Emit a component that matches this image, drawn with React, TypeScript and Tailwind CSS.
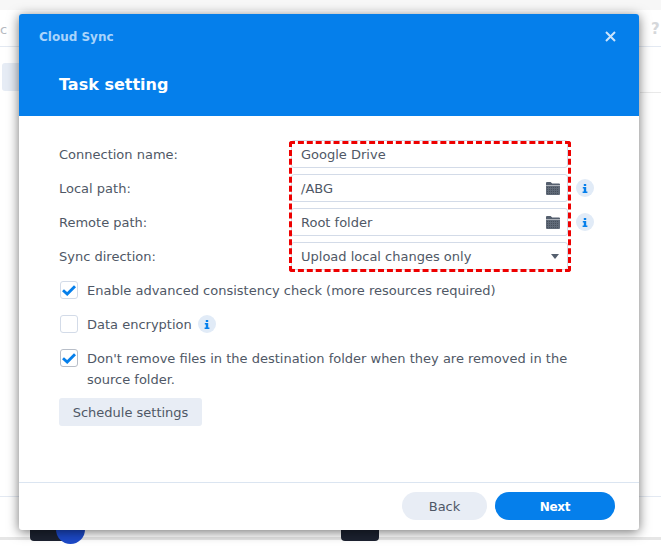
const FONT = "font-['DejaVu_Sans',sans-serif]";

function InfoIcon() {
  return (
    <span className="flex h-[18px] w-[18px] shrink-0 items-center justify-center rounded-full bg-[#e1ebf7]">
      <svg width="6" height="9" viewBox="0 0 6 9" fill="#057feb">
        <rect x="1.8" y="0" width="2.4" height="2" />
        <path d="M0.8 3h3.4v4.6H5.4V9H0.6V7.6h1.2V4.4h-1z" />
      </svg>
    </span>
  );
}

function FolderIcon() {
  return (
    <svg width="14" height="13" viewBox="0 0 14 13" className="-mr-px shrink-0">
      <path d="M0 1a1 1 0 0 1 1-1h3.6l1.6 1.6H13a1 1 0 0 1 1 1V3H0z" fill="#555f6e" />
      <path d="M0 3.6h14V12a1 1 0 0 1-1 1H1a1 1 0 0 1-1-1z" fill="#606a78" />
      <path d="M1 5.5h12M1 7.5h12M1 9.5h12M1 11.5h12" stroke="#47505c" strokeWidth="1" strokeDasharray="1 1" />
    </svg>
  );
}

function Check({ checked, dark }: { checked?: boolean; dark?: boolean }) {
  return (
    <span
      className={`flex h-[18px] w-[18px] shrink-0 items-center justify-center rounded-[3px] border bg-white ${
        dark ? "border-[#b8bec8]" : "border-[#d3dbe8]"
      }`}
    >
      {checked && (
        <svg width="14" height="11" viewBox="0 0 14 11" fill="none">
          <path d="M1 5.2l4.2 3.9L13 1.2" stroke="#057feb" strokeWidth="2.8" />
        </svg>
      )}
    </span>
  );
}

const FIELDS = [
  { label: "Connection name:", value: "Google Drive" },
  { label: "Local path:", value: "/ABG", folder: true },
  { label: "Remote path:", value: "Root folder", folder: true },
  { label: "Sync direction:", value: "Upload local changes only", caret: true },
];

function Backdrop() {
  return (
    <div className="absolute inset-0">
      <div className="absolute left-0 top-0 h-[10px] w-full bg-[#f7f7f7]" />
      <span className="absolute left-0 top-[20px] text-[13px] text-[#b5b9bf]">c</span>
      <span className="absolute left-[651px] top-[18px] text-[15px] font-bold text-[#d5d7da]">?</span>
      <div className="absolute left-0 top-[46px] h-px w-full bg-[#e3e9f2]" />
      <div className="absolute left-[640px] top-[92px] h-px w-[21px] bg-[#e9e9e9]" />
      <div className="absolute left-[2px] top-[63px] h-[28px] w-[20px] rounded-[3px] bg-[#e6ecf5]" />
      <div className="absolute left-0 top-[496px] h-px w-full bg-[#e3e9f2]" />
      <div className="absolute left-0 top-[537px] h-[3px] w-full bg-[#e6e6e6]" />
      <div className="absolute left-[30px] top-[526px] h-[15px] w-[40px] rounded-b-[4px] bg-[#1c2230]" />
      <div className="absolute left-[56px] top-[515px] h-[29px] w-[29px] rounded-full bg-[#1c49c8]" />
      <div className="absolute left-[341px] top-[526px] h-[15px] w-[38px] rounded-b-[4px] bg-[#1c2230]" />
    </div>
  );
}

export default function App() {
  return (
    <div className={`relative h-[546px] w-[661px] overflow-hidden bg-white pl-[19px] pt-[14px] ${FONT}`}>
      <Backdrop />
      <div className="relative flex h-[516px] w-[620px] flex-col overflow-hidden rounded-[3px] bg-white text-[13px] text-[#4f5866] shadow-[0_2px_12px_rgba(0,0,0,0.55)]">
        <div className="h-[102px] shrink-0 bg-[#057feb] pl-[20px] pr-[23px] pt-[14px]">
          <div className="flex items-center justify-between">
            <span className="text-[12px] font-bold text-[#a9d4fb]">Cloud Sync</span>
            <svg width="11" height="11" viewBox="0 0 11 11" stroke="#cbe4fc" strokeWidth="2" className="-mt-px">
              <path d="M1 1l9 9M10 1l-9 9" />
            </svg>
          </div>
          <div className="ml-[20px] mt-[28px] text-[16px] font-bold leading-[22px] text-white">Task setting</div>
        </div>

        <div className="flex flex-1 flex-col pl-[40px] pr-[24px] pt-[24px]">
          <div className="flex flex-col gap-[6px]">
            {FIELDS.map((f) => (
              <div key={f.label} className="flex h-[28px] items-center">
                <span className="w-[232px] shrink-0 pt-px leading-[28px]">{f.label}</span>
                <div className="flex h-[28px] w-[277px] shrink-0 items-center justify-between rounded-[3px] border border-[#d3dbe8] pl-[9px] pr-[8px]">
                  <span className="pt-px">{f.value}</span>
                  {f.folder && <FolderIcon />}
                  {f.caret && <span className="h-0 w-0 border-x-[4.5px] border-t-[5px] border-x-transparent border-t-[#555f6e]" />}
                </div>
                {f.folder && (
                  <span className="ml-[8px]">
                    <InfoIcon />
                  </span>
                )}
              </div>
            ))}
          </div>

          <div className="mt-[11px] flex h-[18px] items-center gap-[9px] pl-px leading-[18px]">
            <Check checked />
            <span className="pt-[2px]">Enable advanced consistency check (more resources required)</span>
          </div>
          <div className="mt-[16px] flex h-[18px] items-center gap-[9px] pl-px leading-[18px]">
            <Check />
            <span className="-mr-[3px] pt-[2px]">Data encryption</span>
            <InfoIcon />
          </div>
          <div className="mt-[16px] flex items-start gap-[9px] pl-px leading-[21px]">
            <Check checked dark />
            <span className="-mt-px w-[500px]">Don't remove files in the destination folder when they are removed in the source folder.</span>
          </div>
          <button className="mt-[8px] h-[28px] w-[143px] rounded-[3px] bg-[#e8edf5] pt-px text-[13px] text-[#4f5866]">Schedule settings</button>
        </div>

        <div className="flex h-[48px] shrink-0 items-start justify-end gap-[8px] border-t border-[#dbe5f1] pr-[24px] pt-[9px]">
          <button className="h-[28px] w-[85px] rounded-full bg-[#e8edf5] pt-px text-[13px] text-[#4f5866]">Back</button>
          <button className="h-[28px] w-[120px] rounded-full bg-[#057feb] pt-px text-[12px] font-bold tracking-[-0.3px] text-white">Next</button>
        </div>

        <div className="pointer-events-none absolute left-[270px] top-[127px] h-[131px] w-[282px] rounded-[3px] border-[3px] border-dashed border-[#ee0000]" />
      </div>
    </div>
  );
}
